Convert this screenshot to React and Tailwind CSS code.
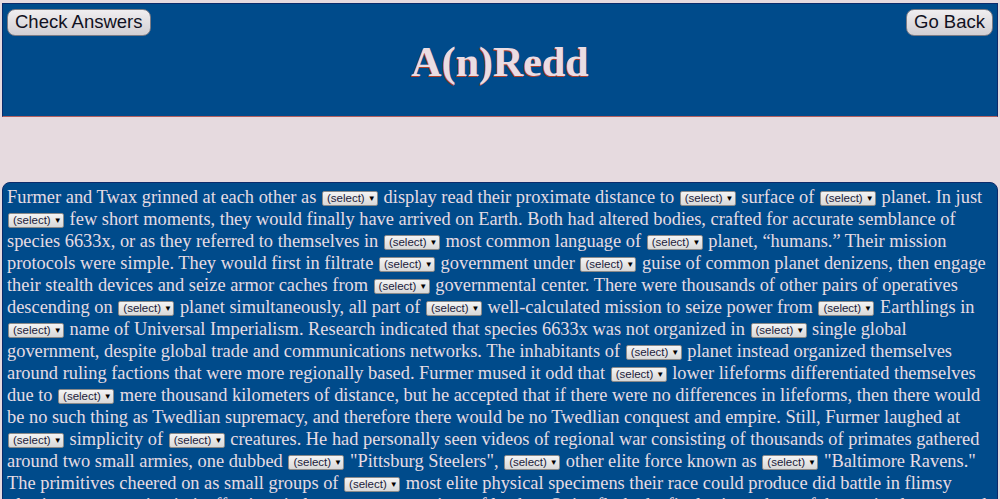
import React from 'react'

function Sel() {
  return (
    <span className="inline-flex items-center justify-between gap-[3px] align-[1px] h-[15px] w-[56px] pl-[4px] pr-[4px] mx-[1px] border border-[#8a8a8a] bg-gradient-to-b from-[#f4f4f4] to-[#d8d8d8] rounded-[2px] text-[11.5px] leading-none text-[#1b1b3a] font-['Liberation_Sans',Arial,sans-serif]">
      <span>(select)</span>
      <span className="text-[8px] text-black">▼</span>
    </span>
  )
}

const S = <Sel />

export default function App() {
  return (
    <div className="min-h-screen bg-[#e6dadf] pt-[3px] px-[2px] overflow-hidden">
      {/* Header */}
      <div className="relative h-[114px] bg-[#004b8b] border border-[#0b2b6b] border-b-[#b06060] flex justify-center">
        <button className="absolute left-[4px] top-[5px] h-[27px] px-[7px] rounded-[8px] border border-[#7b7b85] bg-gradient-to-b from-[#f0eef0] to-[#d2cfd3] text-[18.5px] leading-none text-[#111122] font-['Liberation_Sans',Arial,sans-serif]">
          Check Answers
        </button>
        <button className="absolute right-[4px] top-[5px] h-[27px] px-[7px] rounded-[8px] border border-[#7b7b85] bg-gradient-to-b from-[#f0eef0] to-[#d2cfd3] text-[18.5px] leading-none text-[#111122] font-['Liberation_Sans',Arial,sans-serif]">
          Go Back
        </button>
        <h1 className="mt-[37px] text-[42px] leading-none font-bold text-[#eadde3] font-['Liberation_Serif','Times_New_Roman',serif] [text-shadow:-1px_1px_0_#b0402a]">
          A(n)Redd
        </h1>
      </div>

      {/* Story */}
      <div className="mt-[65px] bg-[#004b8b] border border-[#0b2b6b] rounded-t-[8px] pl-[4px] pr-[3px] pt-[3px] text-[18.4px] leading-[22px] text-[#e6dce3] font-['Liberation_Serif','Times_New_Roman',serif]">
        <p>
          Furmer and Twax grinned at each other as {S} display read their proximate distance to {S} surface of {S} planet. In just {S} few
          short moments, they would finally have arrived on Earth. Both had altered bodies, crafted for accurate semblance of species 6633x,
          or as they referred to themselves in {S} most common language of {S} planet, “humans.” Their mission protocols were simple. They
          would first in filtrate {S} government under {S} guise of common planet denizens, then engage their stealth devices and seize
          armor caches from {S} governmental center. There were thousands of other pairs of operatives descending on {S} planet
          simultaneously, all part of {S} well-calculated mission to seize power from {S} Earthlings in {S} name of Universal Imperialism.
          Research indicated that species 6633x was not organized in {S} single global government, despite global trade and communications
          networks. The inhabitants of {S} planet instead organized themselves around ruling factions that were more regionally based.
          Furmer mused it odd that {S} lower lifeforms differentiated themselves due to {S} mere thousand kilometers of distance, but he
          accepted that if there were no differences in lifeforms, then there would be no such thing as Twedlian supremacy, and therefore
          there would be no Twedlian conquest and empire. Still, Furmer laughed at {S} simplicity of {S} creatures. He had personally seen
          videos of regional war consisting of thousands of primates gathered around two small armies, one dubbed {S} "Pittsburg
          Steelers", {S} other elite force known as {S} "Baltimore Ravens." The primitives cheered on as small groups of {S} most elite
          physical specimens their race could produce did battle in flimsy plastic armor, running in ineffective circles over {S} piece of
          leather. Quirn flashed a final grin as the craft began its descent, and the two operatives prepared for landing on the surface.
        </p>
      </div>
    </div>
  )
}
